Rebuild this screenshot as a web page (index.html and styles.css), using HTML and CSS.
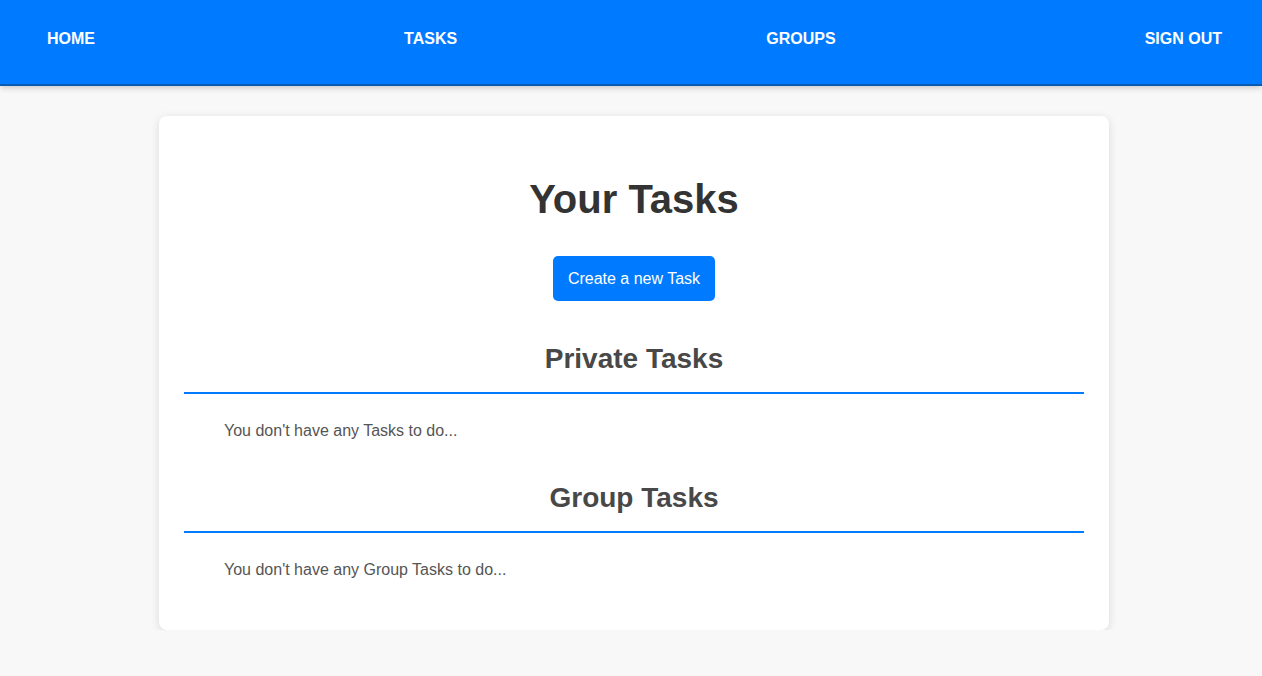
FILE: index.html
```html
<!DOCTYPE html>
<html>
<head>
<meta charset="utf-8">
<link rel="stylesheet" href="styles.css">
</head>
<body>
<nav class="nav">
  <a class="nav-link" href="#">HOME</a>
  <a class="nav-link" href="#">TASKS</a>
  <a class="nav-link" href="#">GROUPS</a>
  <a class="nav-link" href="#">SIGN OUT</a>
</nav>
<main class="main">
  <section class="card">
    <h1 class="title">Your Tasks</h1>
    <div class="actions"><button class="btn">Create a new Task</button></div>
    <h2 class="section-title">Private Tasks</h2>
    <p class="empty">You don't have any Tasks to do...</p>
    <h2 class="section-title">Group Tasks</h2>
    <p class="empty">You don't have any Group Tasks to do...</p>
  </section>
</main>
</body>
</html>
```
FILE: styles.css
```css
* { box-sizing: border-box; }
html, body { margin: 0; padding: 0; }
body {
  background: #f8f8f8;
  font-family: "Liberation Sans", Arial, sans-serif;
  color: #333;
}
.nav {
  height: 86px;
  background: #007bff;
  border-bottom: 2px solid #0a5bb0;
  box-shadow: 0 2px 6px rgba(0,0,0,0.18);
  display: flex;
  justify-content: space-between;
  align-items: flex-start;
  padding: 30px 40px 0 47px;
}
.nav-link {
  color: #fff;
  font-weight: bold;
  font-size: 16px;
  text-decoration: none;
  line-height: 18px;
}
.main {
  display: flex;
  justify-content: center;
  padding: 30px 0 0 6px;
}
.card {
  width: 950px;
  background: #fff;
  border-radius: 8px;
  box-shadow: 0 2px 10px rgba(0,0,0,0.12);
  padding: 40px 25px 39px;
}
.title {
  margin: 20px 0 0;
  text-align: center;
  font-size: 40px;
  line-height: 46px;
  color: #333;
}
.actions {
  display: flex;
  justify-content: center;
  margin-top: 34px;
}
.btn {
  height: 45px;
  padding: 0 15px;
  border: none;
  border-radius: 5px;
  background: #007bff;
  color: #fff;
  font-family: "Liberation Sans", Arial, sans-serif;
  font-size: 16px;
}
.section-title {
  margin: 42px 0 0;
  text-align: center;
  font-size: 28px;
  line-height: 32px;
  color: #484848;
  padding-bottom: 17px;
  border-bottom: 2px solid #007bff;
}
.empty {
  margin: 28px 0 12px;
  padding-left: 40px;
  font-size: 16px;
  line-height: 18px;
  color: #555;
}
```
